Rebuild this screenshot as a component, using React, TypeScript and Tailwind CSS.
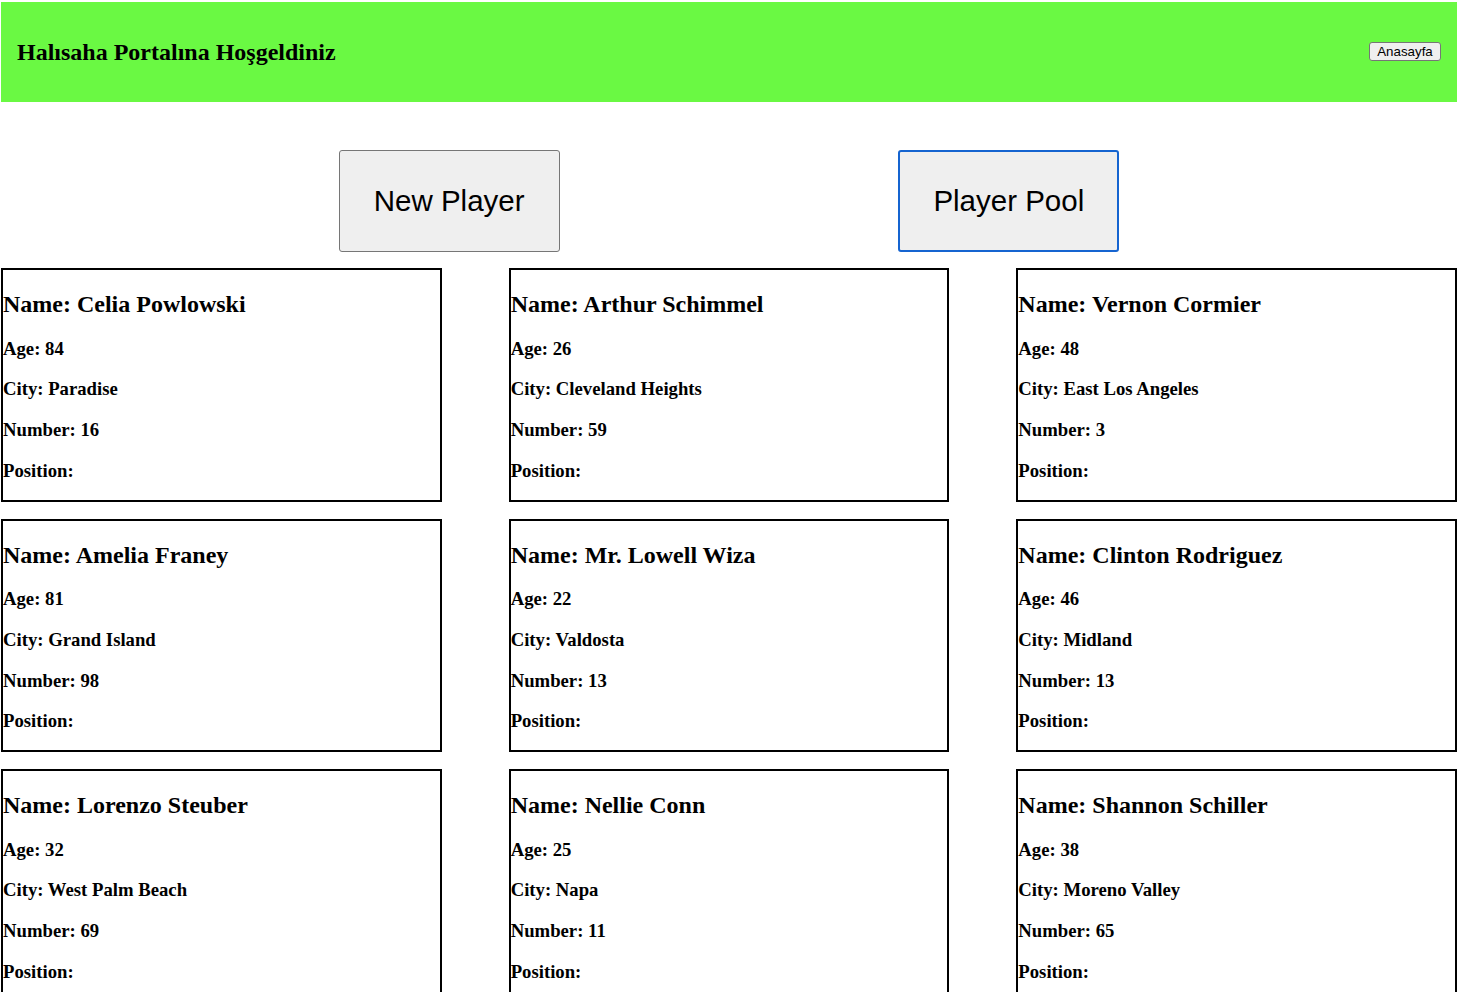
import React from "react";

const players = [
  { name: "Celia Powlowski", age: 84, city: "Paradise", number: 16 },
  { name: "Arthur Schimmel", age: 26, city: "Cleveland Heights", number: 59 },
  { name: "Vernon Cormier", age: 48, city: "East Los Angeles", number: 3 },
  { name: "Amelia Franey", age: 81, city: "Grand Island", number: 98 },
  { name: "Mr. Lowell Wiza", age: 22, city: "Valdosta", number: 13 },
  { name: "Clinton Rodriguez", age: 46, city: "Midland", number: 13 },
  { name: "Lorenzo Steuber", age: 32, city: "West Palm Beach", number: 69 },
  { name: "Nellie Conn", age: 25, city: "Napa", number: 11 },
  { name: "Shannon Schiller", age: 38, city: "Moreno Valley", number: 65 },
];

const serif = "font-['Liberation_Serif','Times_New_Roman',serif]";
const sans = "font-['Liberation_Sans',Arial,sans-serif]";

export default function App() {
  return (
    <div className={`bg-white min-h-screen text-black ${serif}`}>
      <div className="pt-[2px] pl-[1px] w-[1457px]">
        <header className="h-[100px] bg-[#6af943] flex items-center justify-between pl-[16px] pr-[16px]">
          <h2 className="text-[24px] font-bold leading-[28px]">Halısaha Portalına Hoşgeldiniz</h2>
          <button
            className={`${sans} text-[13.33px] leading-[15px] bg-[#efefef] border border-[#767676] rounded-[3px] px-[6px] py-[1px] h-[19px] w-[72px] -mt-[2px]`}
          >
            Anasayfa
          </button>
        </header>
      </div>
      <div className="w-[1458px] flex justify-evenly mt-[48px]">
        <button
          className={`${sans} w-[221px] h-[102px] text-[29.5px] bg-[#efefef] border border-[#767676] rounded-[3px]`}
        >
          New Player
        </button>
        <button
          className={`${sans} w-[221px] h-[102px] text-[29.5px] bg-[#efefef] border-2 border-[#1564d0] rounded-[3px]`}
        >
          Player Pool
        </button>
      </div>
      <div className="ml-[1px] mt-[16px] w-[1456px] grid grid-cols-3 gap-x-[67px] gap-y-[17px]">
        {players.map((p) => (
          <div key={p.name} className="border-2 border-black h-[233.5px]">
            <h2 className="text-[24px] font-bold leading-[27.6px] mt-[21px] mb-[19px]">Name: {p.name}</h2>
            <h3 className="text-[18.72px] font-bold leading-[21.5px] mb-[19.3px]">Age: {p.age}</h3>
            <h3 className="text-[18.72px] font-bold leading-[21.5px] mb-[19.3px]">City: {p.city}</h3>
            <h3 className="text-[18.72px] font-bold leading-[21.5px] mb-[19.3px]">Number: {p.number}</h3>
            <h3 className="text-[18.72px] font-bold leading-[21.5px]">Position: </h3>
          </div>
        ))}
      </div>
    </div>
  );
}
